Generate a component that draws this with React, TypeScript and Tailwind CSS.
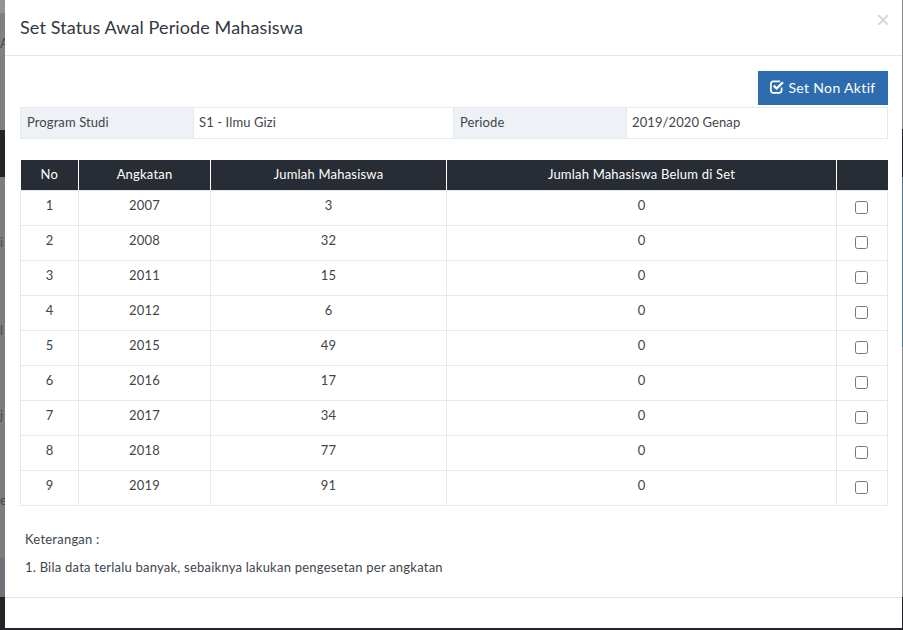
const rows = [
  { no: 1, angkatan: 2007, jumlah: 3 },
  { no: 2, angkatan: 2008, jumlah: 32 },
  { no: 3, angkatan: 2011, jumlah: 15 },
  { no: 4, angkatan: 2012, jumlah: 6 },
  { no: 5, angkatan: 2015, jumlah: 49 },
  { no: 6, angkatan: 2016, jumlah: 17 },
  { no: 7, angkatan: 2017, jumlah: 34 },
  { no: 8, angkatan: 2018, jumlah: 77 },
  { no: 9, angkatan: 2019, jumlah: 91 },
];

function CheckIcon() {
  return (
    <svg width="14" height="14" viewBox="0 0 14 14" fill="none" stroke="currentColor" strokeWidth="1.7" className="shrink-0">
      <path d="M11.6 7.6v3a2.2 2.2 0 0 1-2.2 2.2H3.1a2.2 2.2 0 0 1-2.2-2.2V3.6a2.2 2.2 0 0 1 2.2-2.2h7" />
      <path d="M3.7 5.6 6.6 8.5 13 2.2" strokeWidth="2.3" />
    </svg>
  );
}

export default function App() {
  return (
    <div className="flex h-[630px] w-[903px] overflow-hidden bg-[#232427] font-['Lato',sans-serif] text-[13px] text-[#41454b]">
      {/* backdrop left */}
      <div className="flex w-[5px] flex-col overflow-hidden text-[#4a4a4a]">
        <div className="h-[13px] bg-[#8f9499]" />
        <div className="h-[117px] bg-[#808080] pt-[22px] leading-[16px]">A</div>
        <div className="h-[47px] bg-[#232427]" />
        <div className="h-[380px] bg-[#7d7d7d] pt-[57px] leading-[16px]">
          <div>i</div>
          <div className="mt-[72px]">l</div>
          <div className="mt-[69px]">j</div>
          <div className="mt-[69px]">e</div>
        </div>
        <div className="h-[40px] bg-[#6f7276]" />
        <div className="flex-1 bg-[#232427]" />
      </div>

      <div className="flex h-[628px] w-[897px] flex-col bg-white">
        <div className="relative flex h-[56px] items-center border-b border-[#e5e5e5] pb-[2px] pl-[15px]">
          <h4 className="text-[18px] leading-none tracking-[0.12px] text-[#33373c]">Set Status Awal Periode Mahasiswa</h4>
          <span className="absolute right-[12px] top-[12px] font-['Liberation_Sans',sans-serif] text-[24px] leading-[16px] text-[#d4d4d4]">×</span>
        </div>

        <div className="flex h-[542px] flex-col border-b border-[#e5e5e5] pl-[15px] pr-[14px] pt-[15px]">
          <div className="flex justify-end">
            <button className="flex h-[34px] w-[130px] items-center justify-center gap-[4px] bg-[#2d6cae] pb-[2px] text-[14px] tracking-[0.35px] text-white">
              <CheckIcon />
              Set Non Aktif
            </button>
          </div>

          <table className="mt-[2px] h-[32px] w-[868px] table-fixed border-collapse border border-[#e4e8f0]">
            <tbody>
              <tr>
                <td className="w-[173px] border border-[#e4e8f0] bg-[#eef1f6] pl-[6px] tracking-[0.1px]">Program Studi</td>
                <td className="w-[260px] border border-[#e4e8f0] pl-[5px] tracking-[0.1px]">S1 - Ilmu Gizi</td>
                <td className="w-[173px] border border-[#e4e8f0] bg-[#eef1f6] pl-[6px] tracking-[0.1px]">Periode</td>
                <td className="border border-[#e4e8f0] pl-[5px] tracking-[0.1px]">2019/2020 Genap</td>
              </tr>
            </tbody>
          </table>

          <table className="mt-[21px] w-[868px] table-fixed border-collapse text-center">
            <thead>
              <tr className="h-[30px] bg-[#282c34] text-white">
                <th className="w-[58px] border-r border-white font-normal tracking-[0.2px]">No</th>
                <th className="w-[132px] border-r border-white font-normal tracking-[0.2px]">Angkatan</th>
                <th className="w-[236px] border-r border-white font-normal tracking-[0.2px]">Jumlah Mahasiswa</th>
                <th className="w-[390px] border-r border-white font-normal tracking-[0.2px]">Jumlah Mahasiswa Belum di Set</th>
                <th />
              </tr>
            </thead>
            <tbody>
              {rows.map((r) => (
                <tr key={r.no} className="h-[35px]">
                  <td className="border border-[#e4e8f0] pb-[4px] tracking-[0.2px]">{r.no}</td>
                  <td className="border border-[#e4e8f0] pb-[4px] tracking-[0.2px]">{r.angkatan}</td>
                  <td className="border border-[#e4e8f0] pb-[4px] tracking-[0.2px]">{r.jumlah}</td>
                  <td className="border border-[#e4e8f0] pb-[4px] tracking-[0.2px]">0</td>
                  <td className="border border-[#e4e8f0]">
                    <input type="checkbox" className="m-0 block h-[13px] w-[13px] translate-x-[18px]" />
                  </td>
                </tr>
              ))}
            </tbody>
          </table>

          <p className="mt-[25px] pl-[5px] leading-[16px] tracking-[0.23px]">Keterangan :</p>
          <p className="mt-[12px] pl-[5px] leading-[16px] tracking-[0.23px]">1. Bila data terlalu banyak, sebaiknya lakukan pengesetan per angkatan</p>
        </div>
      </div>

      {/* backdrop right */}
      <div className="flex w-[1px] flex-col">
        <div className="h-[129px] bg-[#8c8c8c]" />
        <div className="h-[48px] bg-[#232427]" />
        <div className="h-[170px] bg-[#57707f]" />
        <div className="h-[250px] bg-[#8c8c8c]" />
        <div className="flex-1 bg-[#232427]" />
      </div>
    </div>
  );
}
